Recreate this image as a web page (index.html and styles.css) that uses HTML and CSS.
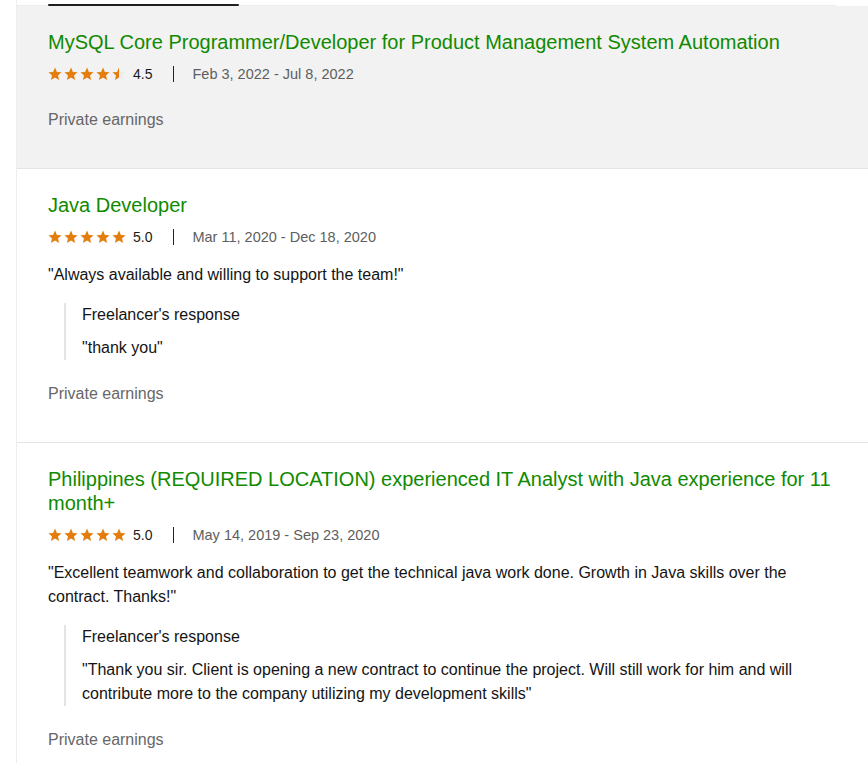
FILE: index.html
```html
<!DOCTYPE html>
<html lang="en">
<head>
    <meta charset="UTF-8">
    <meta name="viewport" content="width=device-width, initial-scale=1.0">
    <title>Work history</title>
    <link rel="stylesheet" href="styles.css">
</head>
<body>
    <svg width="0" height="0" class="defs">
        <defs>
            <path id="st" d="M7 0.6l1.9 4.3 4.6.4-3.5 3.1 1.1 4.6L7 10.6 2.9 13l1.1-4.6L.5 5.3l4.6-.4z"/>
            <linearGradient id="meia" x1="0" x2="1" y1="0" y2="0">
                <stop offset="50%" stop-color="#e37d0d"/>
                <stop offset="50%" stop-color="#ebebeb"/>
            </linearGradient>
        </defs>
    </svg>

    <div class="lista">
        <div class="topo">
            <span class="aba"></span>
        </div>

        <section class="item ativo">
            <h3 class="titulo">MySQL Core Programmer/Developer for Product Management System Automation</h3>
            <div class="info">
                <span class="estrelas">
                    <svg width="78" height="14" viewBox="0 0 78 14">
                        <use href="#st" x="0" fill="#e37d0d"/>
                        <use href="#st" x="16" fill="#e37d0d"/>
                        <use href="#st" x="32" fill="#e37d0d"/>
                        <use href="#st" x="48" fill="#e37d0d"/>
                        <use href="#st" x="64" fill="url(#meia)"/>
                    </svg>
                </span>
                <span class="nota">4.5</span>
                <span class="data">Feb 3, 2022 - Jul 8, 2022</span>
            </div>
            <p class="ganhos">Private earnings</p>
        </section>

        <section class="item">
            <h3 class="titulo">Java Developer</h3>
            <div class="info">
                <span class="estrelas">
                    <svg width="78" height="14" viewBox="0 0 78 14">
                        <use href="#st" x="0" fill="#e37d0d"/>
                        <use href="#st" x="16" fill="#e37d0d"/>
                        <use href="#st" x="32" fill="#e37d0d"/>
                        <use href="#st" x="48" fill="#e37d0d"/>
                        <use href="#st" x="64" fill="#e37d0d"/>
                    </svg>
                </span>
                <span class="nota">5.0</span>
                <span class="data">Mar 11, 2020 - Dec 18, 2020</span>
            </div>
            <p class="comentario">"Always available and willing to support the team!"</p>
            <div class="resposta">
                <p class="resposta-titulo">Freelancer's response</p>
                <p class="resposta-texto">"thank you"</p>
            </div>
            <p class="ganhos">Private earnings</p>
        </section>

        <section class="item">
            <h3 class="titulo">Philippines (REQUIRED LOCATION) experienced IT Analyst with Java experience for 11 month+</h3>
            <div class="info">
                <span class="estrelas">
                    <svg width="78" height="14" viewBox="0 0 78 14">
                        <use href="#st" x="0" fill="#e37d0d"/>
                        <use href="#st" x="16" fill="#e37d0d"/>
                        <use href="#st" x="32" fill="#e37d0d"/>
                        <use href="#st" x="48" fill="#e37d0d"/>
                        <use href="#st" x="64" fill="#e37d0d"/>
                    </svg>
                </span>
                <span class="nota">5.0</span>
                <span class="data">May 14, 2019 - Sep 23, 2020</span>
            </div>
            <p class="comentario">"Excellent teamwork and collaboration to get the technical java work done. Growth in Java skills over the contract. Thanks!"</p>
            <div class="resposta">
                <p class="resposta-titulo">Freelancer's response</p>
                <p class="resposta-texto">"Thank you sir. Client is opening a new contract to continue the project. Will still work for him and will contribute more to the company utilizing my development skills"</p>
            </div>
            <p class="ganhos">Private earnings</p>
        </section>
    </div>
</body>
</html>
```

FILE: styles.css
```css
body {
    margin: 0;
    padding: 0;
    background: #ffffff;
    font-family: "Liberation Sans", Arial, sans-serif;
    color: #141414;
}

p {
    margin: 0;
}

.defs {
    position: absolute;
}

.lista {
    margin-left: 16px;
    border-left: 1px solid #eeeeee;
}

.topo {
    height: 6px;
    margin-right: 32px;
    background: #ffffff;
    border-bottom: 1px solid #ececec;
    box-sizing: border-box;
    position: relative;
}

.aba {
    position: absolute;
    left: 31px;
    top: 4px;
    width: 191px;
    height: 2px;
    border-radius: 1px;
    background: #1f1f1f;
}

.item {
    padding: 24px 31px 36px 31px;
    border-bottom: 1px solid #e4e4e4;
}

.item.ativo {
    background: #f2f2f2;
}

.titulo {
    margin: 0 0 8px 0;
    font-size: 20px;
    font-weight: normal;
    line-height: 24px;
    color: #108a00;
}

.info {
    display: flex;
    align-items: center;
    height: 24px;
    font-size: 14px;
}

.estrelas {
    display: flex;
    width: 85px;
}

.nota {
    color: #1a1a1a;
    padding-right: 21px;
    border-right: 1px solid #222222;
    line-height: 16px;
}

.data {
    color: #5e5e5e;
    font-size: 14.5px;
    padding-left: 18px;
}

.comentario {
    margin-top: 14px;
    font-size: 16px;
    line-height: 24px;
}

.resposta {
    margin: 16px 0 0 16px;
    padding-left: 16px;
    border-left: 2px solid #e4e4e4;
}

.resposta-titulo {
    font-size: 16px;
    line-height: 24px;
    margin-bottom: 9px;
}

.resposta-texto {
    font-size: 16px;
    line-height: 24px;
}

.ganhos {
    margin-top: 22px;
    font-size: 16px;
    line-height: 24px;
    color: #676767;
}
```
